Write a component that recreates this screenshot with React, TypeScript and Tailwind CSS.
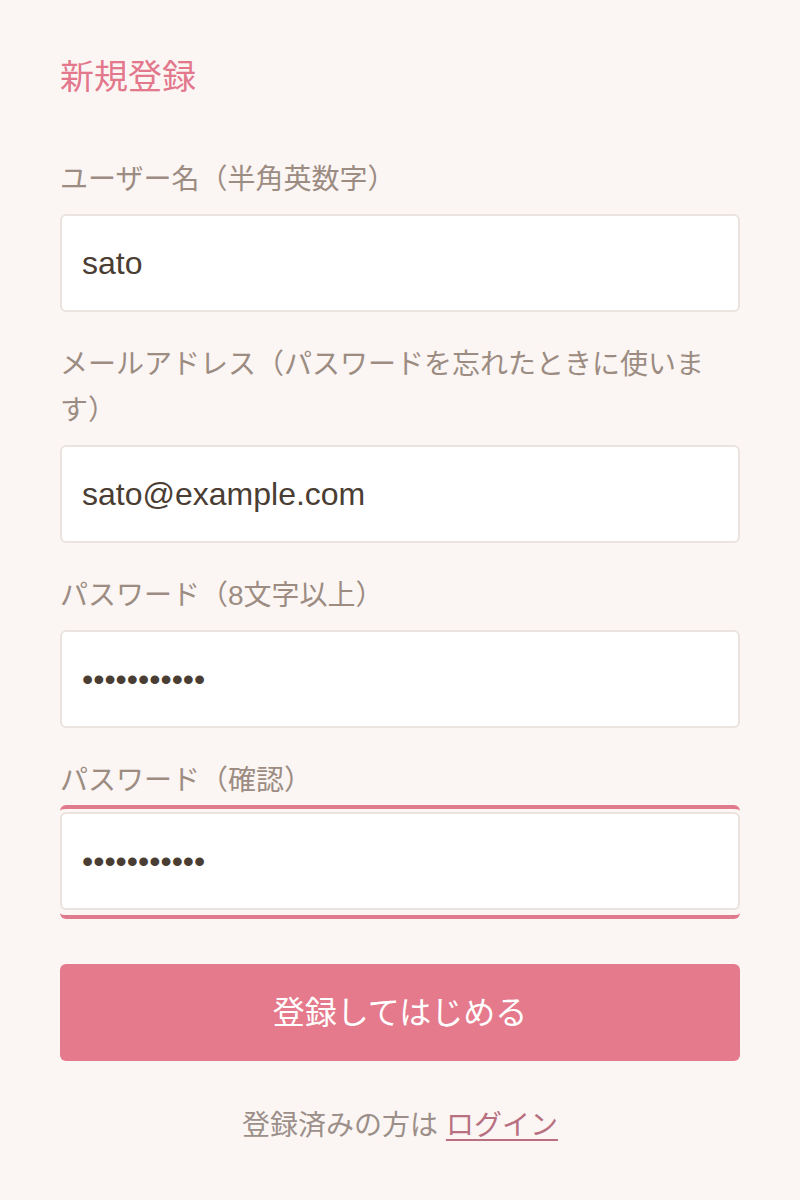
import React from "react";

const font = { fontFamily: '"Liberation Sans", "Noto Sans CJK JP", sans-serif' };

function Label({ children }: { children: React.ReactNode }) {
  return (
    <label className="block text-[28px] leading-[46px] text-[#9c8c82] mb-[11px]">{children}</label>
  );
}

const inputCls =
  "block w-full h-[98px] rounded-[6px] border-2 border-[#ebe3df] bg-white px-[20px] text-[32px] text-[#4a3d33] outline-none";

export default function App() {
  return (
    <div className="min-h-[1200px] w-full bg-[#fbf6f4]" style={font}>
      <div className="px-[60px] pt-[52px]">
        <h1 className="text-[34px] leading-[51px] text-[#e3778c] font-normal mb-[54px]">新規登録</h1>

        <div className="mb-[30px]">
          <Label>ユーザー名（半角英数字）</Label>
          <input className={inputCls} type="text" defaultValue="sato" style={font} />
        </div>

        <div className="mb-[30px]">
          <Label>メールアドレス（パスワードを忘れたときに使います）</Label>
          <input className={inputCls} type="email" defaultValue="sato@example.com" style={font} />
        </div>

        <div className="mb-[30px]">
          <Label>パスワード（8文字以上）</Label>
          <input className={inputCls} type="password" defaultValue="abcdefghijk" style={font} />
        </div>

        <div className="mb-[54px]">
          <Label>パスワード（確認）</Label>
          <div className="-mt-[10px] -mb-[9px] rounded-[6px] border-y-4 border-[#e07b8e] pt-[3px] pb-[5px]">
            <input className={inputCls} type="password" defaultValue="abcdefghijk" style={font} />
          </div>
        </div>

        <button
          type="button"
          className="block w-full h-[97px] rounded-[6px] bg-[#e57a8c] text-white text-[32px]"
          style={font}
        >
          登録してはじめる
        </button>

        <p className="mt-[42px] text-center text-[28px] leading-[46px] text-[#9c8f89]">
          登録済みの方は <a href="#" className="text-[#b86f80] underline underline-offset-[4px] decoration-2">ログイン</a>
        </p>
      </div>
    </div>
  );
}
